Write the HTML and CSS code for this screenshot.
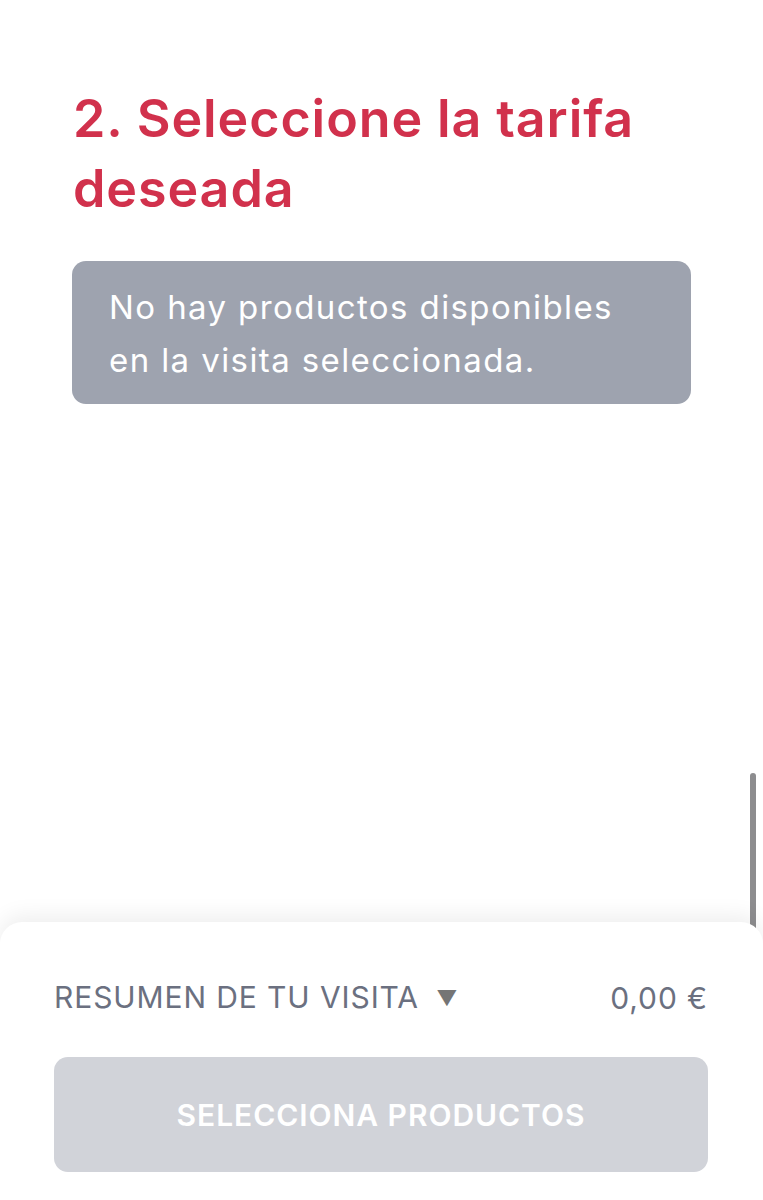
FILE: index.html
```html
<!DOCTYPE html>
<html lang="es">
<head>
<meta charset="utf-8">
<title>Seleccione la tarifa</title>
<link rel="stylesheet" href="styles.css">
</head>
<body>
<div class="page">
  <main class="content">
    <h1 class="title">2. Seleccione la tarifa deseada</h1>
    <div class="notice">No hay productos disponibles en la visita seleccionada.</div>
  </main>
  <div class="scrollbar"></div>
  <footer class="sheet">
    <div class="summary">
      <span class="summary-label">RESUMEN DE TU VISITA <span class="caret">&#9660;</span></span>
      <span class="summary-price">0,00 €</span>
    </div>
    <button class="cta" type="button">SELECCIONA PRODUCTOS</button>
  </footer>
</div>
</body>
</html>
```

FILE: styles.css
```css
html, body {
  margin: 0;
  padding: 0;
  background: #ffffff;
}

body {
  font-family: Inter, "Noto Sans", "Liberation Sans", sans-serif;
}

.page {
  position: relative;
  height: 1200px;
  display: flex;
  flex-direction: column;
  overflow: hidden;
}

.content {
  padding: 84px 72px 0 72px;
}

.title {
  margin: 0;
  padding-left: 1px;
  width: 610px;
  font-size: 52px;
  line-height: 70px;
  font-weight: 600;
  color: #d1314c;
  letter-spacing: 0.9px;
}

.notice {
  margin-top: 37px;
  width: 619px;
  box-sizing: border-box;
  padding: 20px 36px 17px 37px;
  background: #9ea3af;
  border-radius: 14px;
  color: #ffffff;
  font-size: 33px;
  line-height: 53px;
  font-weight: 400;
  letter-spacing: 1.4px;
}

.scrollbar {
  position: absolute;
  left: 750px;
  top: 773px;
  width: 6px;
  height: 160px;
  border-radius: 3px;
  background: #8d8d8f;
}

.sheet {
  position: relative;
  margin-top: auto;
  height: 278px;
  box-sizing: border-box;
  padding: 58px 55px 0 54px;
  background: #ffffff;
  border-radius: 22px 22px 0 0;
  box-shadow: 0 -6px 22px rgba(0, 0, 0, 0.07);
}

.summary {
  display: flex;
  justify-content: space-between;
  align-items: center;
  height: 36px;
  color: #6b7080;
  font-size: 30px;
  line-height: 36px;
  letter-spacing: 0.9px;
}

.caret {
  display: inline-block;
  margin-left: 8px;
  font-size: 21px;
  color: #757575;
  vertical-align: 2px;
  letter-spacing: 0;
}

.cta {
  display: block;
  margin-top: 41px;
  width: 100%;
  height: 115px;
  border: 0;
  border-radius: 14px;
  background: #d1d3d9;
  color: #ffffff;
  font-family: Inter, "Noto Sans", "Liberation Sans", sans-serif;
  font-size: 30px;
  font-weight: 600;
  letter-spacing: 0.95px;
}
```
